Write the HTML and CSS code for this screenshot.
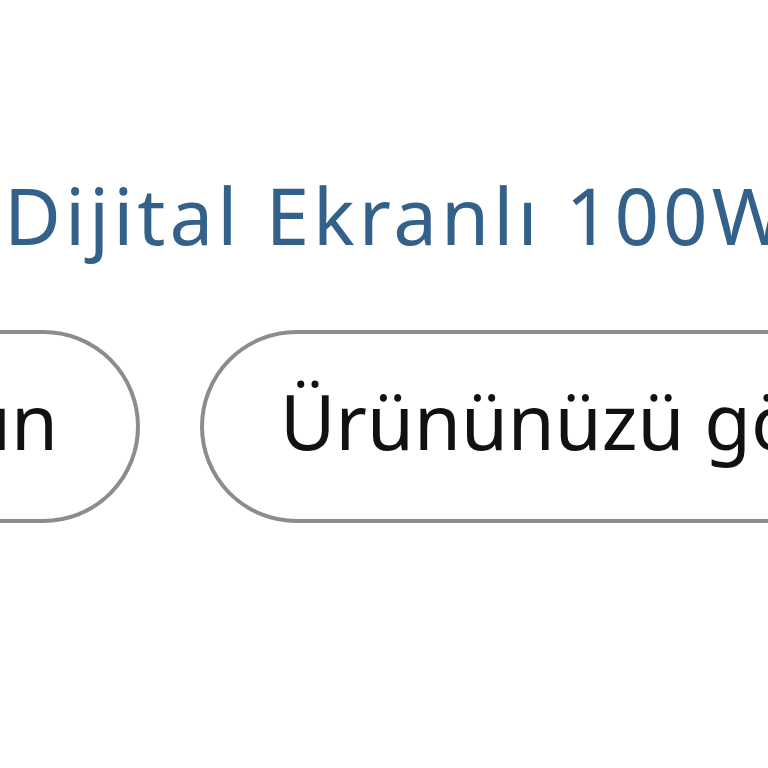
FILE: index.html
```html
<!DOCTYPE html>
<html lang="tr">
<head>
  <meta charset="UTF-8" />
  <meta name="viewport" content="width=device-width, initial-scale=1.0"/>
  <title>Ürün</title>
  <link rel="stylesheet" href="styles.css">
</head>
<body>

  <div class="sayfa">
    <a class="urun-baslik" href="#">Dijital Ekranlı 100W Şarj Cihazı</a>

    <div class="tombol-baris">
      <div class="kotak-kiri">
        <button class="pil-btn">Bize ulaşın</button>
      </div>
      <button class="pil-btn">Ürününüzü gösterin</button>
    </div>
  </div>

</body>
</html>
```

FILE: styles.css
```css
* {
  margin: 0;
  padding: 0;
  box-sizing: border-box;
}

body {
  background-color: #ffffff;
  font-family: 'Noto Sans', 'Open Sans', sans-serif;
  overflow: hidden;
  width: 768px;
  height: 768px;
}

.sayfa {
  padding-top: 160px;
  white-space: nowrap;
}

.urun-baslik {
  display: block;
  font-size: 78px;
  line-height: 110px;
  letter-spacing: 4px;
  color: #33618a;
  text-decoration: none;
  padding-left: 4px;
}

.tombol-baris {
  display: flex;
  gap: 60px;
  margin-top: 60px;
}

.kotak-kiri {
  width: 140px;
  flex-shrink: 0;
  display: flex;
  justify-content: flex-end;
}

.pil-btn {
  flex-shrink: 0;
  height: 193px;
  padding: 0 78px 12px 76px;
  background: #ffffff;
  border: 4px solid #8a8d8d;
  border-radius: 100px;
  font-family: 'Noto Sans', 'Open Sans', sans-serif;
  font-size: 76px;
  color: #111111;
}
```
